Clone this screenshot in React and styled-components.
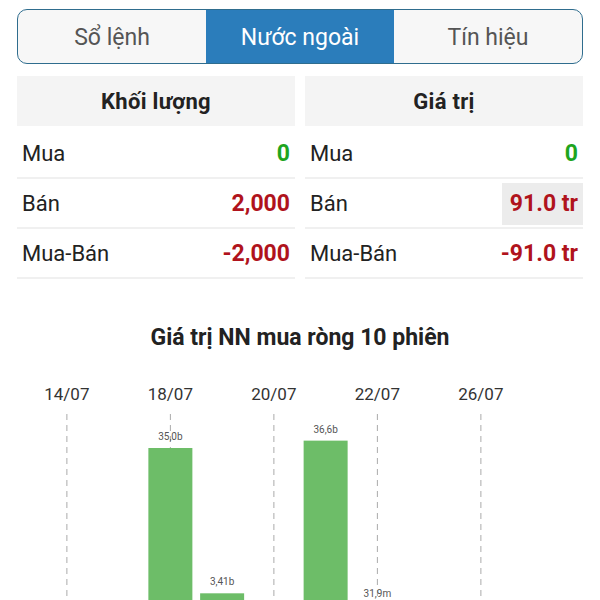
import React from 'react';
import styled, { createGlobalStyle } from 'styled-components';

const GlobalStyle = createGlobalStyle`
  html, body {
    margin: 0;
    padding: 0;
    overflow: hidden;
    background: #fff;
    font-family: Roboto, "Noto Sans", "Liberation Sans", sans-serif;
  }
`;

const Page = styled.div`
  display: flex;
  flex-direction: column;
  width: 600px;
  padding: 9px 17px 0 17px;
  box-sizing: border-box;
`;

const TabBar = styled.div`
  display: grid;
  grid-template-columns: repeat(3, 1fr);
  height: 55px;
  border: 1.5px solid #2f6d8e;
  border-radius: 10px;
  overflow: hidden;
  box-sizing: border-box;
  background: #f7f7f7;
`;

const Tab = styled.div`
  display: flex;
  align-items: center;
  justify-content: center;
  padding-top: 2px;
  font-size: 23px;
  color: ${props => (props.active ? '#fff' : '#555')};
  background: ${props => (props.active ? '#2b7dbb' : 'transparent')};
`;

const Tables = styled.div`
  display: grid;
  grid-template-columns: 1fr 1fr;
  column-gap: 10px;
  margin-top: 12px;
`;

const Panel = styled.div`
  display: flex;
  flex-direction: column;
`;

const PanelHeader = styled.div`
  height: 50px;
  display: flex;
  align-items: center;
  justify-content: center;
  background: #f4f4f4;
  font-size: 22px;
  letter-spacing: 0.3px;
  font-weight: 700;
  color: #222;
  margin-bottom: 3px;
`;

const Row = styled.div`
  height: 47px;
  padding-top: 1px;
  display: flex;
  align-items: center;
  justify-content: space-between;
  border-bottom: 2px solid #f0f0f0;
`;

const Label = styled.span`
  padding-left: 5px;
  font-size: 22px;
  color: #222;
`;

const Value = styled.span`
  display: flex;
  align-items: center;
  height: 42px;
  padding: 0 5px 0 8px;
  font-size: 23px;
  font-weight: 700;
  color: ${props => (props.tone === 'up' ? '#1ea51e' : '#b0131c')};
  background: ${props => (props.highlight ? '#ececec' : 'transparent')};
`;

const ChartTitle = styled.div`
  margin-top: 47px;
  text-align: center;
  font-size: 23px;
  line-height: 24px;
  font-weight: 700;
  color: #222;
`;

const ChartBox = styled.div`
  margin: 9px -17px 0 -17px;
  height: 260px;
`;

const volume = [
  { label: 'Mua', value: '0', tone: 'up' },
  { label: 'Bán', value: '2,000', tone: 'down' },
  { label: 'Mua-Bán', value: '-2,000', tone: 'down' },
];

const worth = [
  { label: 'Mua', value: '0', tone: 'up' },
  { label: 'Bán', value: '91.0 tr', tone: 'down', highlight: true },
  { label: 'Mua-Bán', value: '-91.0 tr', tone: 'down' },
];

const sessions = [
  { date: '14/07', v: 0, text: '' },
  { date: '15/07', v: 0, text: '' },
  { date: '18/07', v: 35.0, text: '35,0b' },
  { date: '19/07', v: 3.41, text: '3,41b' },
  { date: '20/07', v: 0, text: '' },
  { date: '21/07', v: 36.6, text: '36,6b' },
  { date: '22/07', v: 0.0319, text: '31,9m' },
  { date: '25/07', v: 0, text: '' },
  { date: '26/07', v: 0, text: '' },
  { date: '27/07', v: 0, text: '' },
];

function Chart() {
  const left = 41;
  const slot = 51.75;
  const base = 250;
  const scale = 4.6;
  const barW = 44;
  return (
    <svg width="600" height="260" viewBox="0 0 600 260">
      {sessions.map((s, i) =>
        i % 2 === 0 && i < 9 ? (
          <g key={s.date}>
            <text
              x={left + slot * (i + 0.5)}
              y={41}
              textAnchor="middle"
              fontSize="17"
              fill="#333"
              fontFamily="Roboto, sans-serif"
            >
              {s.date}
            </text>
            <line
              x1={left + slot * (i + 0.5)}
              x2={left + slot * (i + 0.5)}
              y1={55}
              y2={260}
              stroke="#aaa"
              strokeWidth="1"
              strokeDasharray="6 5"
            />
          </g>
        ) : null
      )}
      {sessions.map((s, i) => {
        if (!s.text) return null;
        const cx = left + slot * (i + 0.5);
        const h = s.v * scale;
        return (
          <g key={s.date + 'bar'}>
            <rect x={cx - barW / 2} y={base - h} width={barW} height={h} fill="#6dbd68" />
            <text
              x={cx}
              y={Math.min(base - h - 8, 238)}
              textAnchor="middle"
              fontSize="10"
              fill="#555"
              fontFamily="Roboto, sans-serif"
            >
              {s.text}
            </text>
          </g>
        );
      })}
    </svg>
  );
}

function StatPanel({ title, rows }) {
  return (
    <Panel>
      <PanelHeader>{title}</PanelHeader>
      {rows.map(r => (
        <Row key={r.label}>
          <Label>{r.label}</Label>
          <Value tone={r.tone} highlight={r.highlight}>
            {r.value}
          </Value>
        </Row>
      ))}
    </Panel>
  );
}

export default function App() {
  return (
    <Page>
      <GlobalStyle />
      <TabBar>
        <Tab>Sổ lệnh</Tab>
        <Tab active>Nước ngoài</Tab>
        <Tab>Tín hiệu</Tab>
      </TabBar>
      <Tables>
        <StatPanel title="Khối lượng" rows={volume} />
        <StatPanel title="Giá trị" rows={worth} />
      </Tables>
      <ChartTitle>Giá trị NN mua ròng 10 phiên</ChartTitle>
      <ChartBox>
        <Chart />
      </ChartBox>
    </Page>
  );
}
